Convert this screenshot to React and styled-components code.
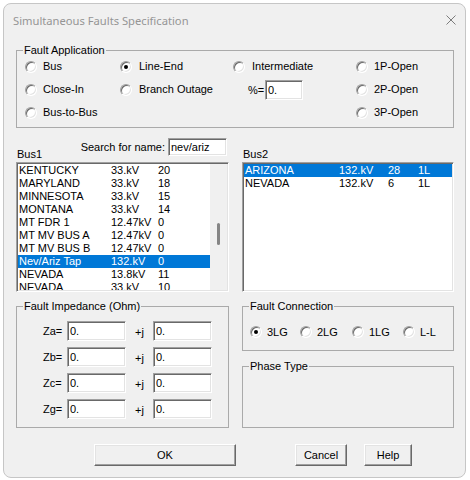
import React from 'react';
import styled, { createGlobalStyle } from 'styled-components';

const GlobalStyle = createGlobalStyle`
  html, body { margin: 0; padding: 0; background: #ffffff; }
  body {
    font-family: "Liberation Sans", Arial, sans-serif;
    font-size: 11px;
    color: #000;
  }
  *, *::before, *::after { box-sizing: border-box; }
`;

const Page = styled.div`
  padding: 3px;
`;

const Window = styled.div`
  width: 463px;
  height: 475px;
  border: 1px solid #c6c6c6;
  border-radius: 8px;
  background: #f0f0f0;
  display: flex;
  flex-direction: column;
  overflow: hidden;
`;

const TitleBar = styled.div`
  height: 32px;
  flex: none;
  display: flex;
  align-items: center;
  justify-content: space-between;
  padding: 0 9px 0 9px;
`;

const Title = styled.span`
  font-family: "Noto Sans", "Open Sans", sans-serif;
  font-size: 11.2px;
  color: #959595;
`;

const CloseButton = styled.span`
  display: flex;
  width: 10px;
  height: 10px;
`;

const Body = styled.div`
  padding: 0 11px 0 12px;
  display: flex;
  flex-direction: column;
`;

const GroupBox = styled.fieldset`
  margin: ${p => p.$mt || 0}px 0 0 0;
  padding: ${p => p.$pt || 0}px 0 ${p => p.$pb || 0}px 0;
  border: 1px solid #aaaaaa;
  min-width: 0;
  ${p => (p.$grow ? 'flex: 1;' : '')}
`;

const Legend = styled.legend`
  padding: 0 1px;
  margin-left: 6px;
  line-height: 13px;
  font-size: 11px;
  font-weight: normal;
`;

const AppGrid = styled.div`
  display: grid;
  grid-template-columns: 95px 113px 123px 1fr;
  grid-auto-rows: 23px;
  margin-top: -2px;
  padding-left: 8px;
`;

const RadioItem = styled.label`
  display: flex;
  align-items: center;
  gap: ${p => p.$gap || 6}px;
  white-space: nowrap;
  line-height: 13px;
`;

const RadioDot = styled.span`
  position: relative;
  flex: none;
  width: 12px;
  height: 12px;
  border-radius: 50%;
  background: #fff;
  border: 1px solid;
  border-color: #a0a0a0 #ffffff #ffffff #a0a0a0;
  box-shadow: inset 1px 1px 0 #696969, inset -1px -1px 0 #e3e3e3;
  &::after {
    content: '';
    display: ${p => (p.$checked ? 'block' : 'none')};
    position: absolute;
    left: 3px;
    top: 3px;
    width: 4px;
    height: 4px;
    border-radius: 50%;
    background: #000;
  }
`;

const Cell = styled.div`
  display: flex;
  align-items: center;
  padding-left: ${p => p.$pl || 0}px;
`;

const PercentLabel = styled.span`
  width: 17px;
  flex: none;
`;

const TextField = styled.input`
  width: ${p => p.$w}px;
  height: ${p => p.$h || 20}px;
  margin: 0;
  padding: 0 0 0 2px;
  border: 1px solid;
  border-color: #a0a0a0 #ffffff #ffffff #a0a0a0;
  box-shadow: inset 1px 1px 0 #696969, inset -1px -1px 0 #e3e3e3;
  background: #fff;
  font-family: "Liberation Sans", Arial, sans-serif;
  font-size: 11px;
  color: #000;
  outline: none;
  border-radius: 0;
`;

const TwoCols = styled.div`
  display: grid;
  grid-template-columns: 213px 212px;
  column-gap: 13px;
  margin-top: ${p => p.$mt}px;
`;

const Column = styled.div`
  display: flex;
  flex-direction: column;
`;

const ListHeader = styled.div`
  height: 24px;
  display: flex;
  justify-content: space-between;
  align-items: flex-start;
`;

const HeaderLabel = styled.span`
  align-self: flex-end;
  line-height: 13px;
  margin-bottom: 1px;
  padding-left: 1px;
`;

const Search = styled.div`
  display: flex;
  align-items: center;
  gap: 3px;
  margin-right: 2px;
  line-height: 13px;
`;

const ListBox = styled.div`
  height: 130px;
  background: #fff;
  border: 1px solid;
  border-color: #a0a0a0 #ffffff #ffffff #a0a0a0;
  box-shadow: inset 1px 1px 0 #696969, inset -1px -1px 0 #e3e3e3;
  padding: 1px;
  display: flex;
  overflow: hidden;
`;

const Items = styled.div`
  flex: 1;
  min-width: 0;
  overflow: hidden;
`;

const Row = styled.div`
  display: grid;
  grid-template-columns: ${p => p.$cols};
  height: 13px;
  line-height: 13px;
  padding-left: 1px;
  white-space: nowrap;
  background: ${p => (p.$sel ? '#0078d7' : 'transparent')};
  color: ${p => (p.$sel ? '#ffffff' : '#000000')};
`;

const ScrollBar = styled.div`
  width: 17px;
  flex: none;
  background: #f0f0f0;
  display: flex;
  justify-content: center;
  padding-top: 59px;
`;

const Thumb = styled.div`
  width: 3px;
  height: 22px;
  border-radius: 2px;
  background: #858585;
`;

const ImpGrid = styled.div`
  display: grid;
  grid-template-columns: 24px 59px 27px 59px;
  grid-auto-rows: 20px;
  row-gap: 6px;
  padding-left: 26px;
  align-items: center;
`;

const PlusJ = styled.span`
  padding-left: 9px;
  padding-top: 2px;
`;

const ConnRow = styled.div`
  display: grid;
  grid-template-columns: 50px 52px 51px auto;
  height: 18px;
  align-items: center;
  padding-left: 7px;
`;

const ButtonRow = styled.div`
  display: flex;
  margin-top: 16px;
  padding-left: 78px;
`;

const Button = styled.button`
  width: ${p => p.$w}px;
  height: 22px;
  margin: 0 0 0 ${p => p.$ml || 0}px;
  padding: 0;
  background: #f0f0f0;
  border: 1px solid;
  border-color: #ffffff #696969 #696969 #ffffff;
  box-shadow: inset -1px -1px 0 #a0a0a0, inset 1px 1px 0 #e3e3e3;
  font-family: "Liberation Sans", Arial, sans-serif;
  font-size: 11px;
  color: #000;
  border-radius: 0;
`;

function Radio({ label, checked, gap }) {
  return (
    <RadioItem $gap={gap}>
      <RadioDot $checked={checked} />
      <span>{label}</span>
    </RadioItem>
  );
}

const bus1 = [
  ['KENTUCKY', '33.kV', '20'],
  ['MARYLAND', '33.kV', '18'],
  ['MINNESOTA', '33.kV', '15'],
  ['MONTANA', '33.kV', '14'],
  ['MT FDR 1', '12.47kV', '0'],
  ['MT MV BUS A', '12.47kV', '0'],
  ['MT MV BUS B', '12.47kV', '0'],
  ['Nev/Ariz Tap', '132.kV', '0', true],
  ['NEVADA', '13.8kV', '11'],
  ['NEVADA', '33.kV', '10'],
];

const bus2 = [
  ['ARIZONA', '132.kV', '28', '1L', true],
  ['NEVADA', '132.kV', '6', '1L'],
];

const imp = ['Za=', 'Zb=', 'Zc=', 'Zg='];

export default function App() {
  return (
    <>
      <GlobalStyle />
      <Page>
        <Window>
          <TitleBar>
            <Title>Simultaneous Faults Specification</Title>
            <CloseButton>
              <svg width="10" height="10" viewBox="0 0 10 10">
                <path d="M0.5 0.5 L9.5 9.5 M9.5 0.5 L0.5 9.5" stroke="#7c7c7c" strokeWidth="1" fill="none" />
              </svg>
            </CloseButton>
          </TitleBar>
          <Body>
            <GroupBox $mt={8} $pb={3}>
              <Legend>Fault Application</Legend>
              <AppGrid>
                <Radio label="Bus" />
                <Radio label="Line-End" checked gap={7} />
                <Radio label="Intermediate" gap={7} />
                <Radio label="1P-Open" />
                <Radio label="Close-In" />
                <Radio label="Branch Outage" gap={7} />
                <Cell $pl={15}>
                  <PercentLabel>%=</PercentLabel>
                  <TextField $w={38} readOnly defaultValue="0." />
                </Cell>
                <Radio label="2P-Open" />
                <Radio label="Bus-to-Bus" />
                <div />
                <div />
                <Radio label="3P-Open" />
              </AppGrid>
            </GroupBox>

            <TwoCols $mt={10}>
              <Column>
                <ListHeader>
                  <HeaderLabel>Bus1</HeaderLabel>
                  <Search>
                    <span>Search for name:</span>
                    <TextField $w={59} $h={18} readOnly defaultValue="nev/ariz" />
                  </Search>
                </ListHeader>
                <ListBox>
                  <Items>
                    {bus1.map((r, i) => (
                      <Row key={i} $cols="92px 47px auto" $sel={r[3]}>
                        <span>{r[0]}</span>
                        <span>{r[1]}</span>
                        <span>{r[2]}</span>
                      </Row>
                    ))}
                  </Items>
                  <ScrollBar>
                    <Thumb />
                  </ScrollBar>
                </ListBox>
              </Column>
              <Column>
                <ListHeader>
                  <HeaderLabel>Bus2</HeaderLabel>
                </ListHeader>
                <ListBox>
                  <Items>
                    {bus2.map((r, i) => (
                      <Row key={i} $cols="94px 49px 30px auto" $sel={r[4]}>
                        <span>{r[0]}</span>
                        <span>{r[1]}</span>
                        <span>{r[2]}</span>
                        <span>{r[3]}</span>
                      </Row>
                    ))}
                  </Items>
                </ListBox>
              </Column>
            </TwoCols>

            <TwoCols $mt={8}>
              <GroupBox $pt={8} $pb={8}>
                <Legend>Fault Impedance (Ohm)</Legend>
                <ImpGrid>
                  {imp.map(l => (
                    <React.Fragment key={l}>
                      <span>{l}</span>
                      <TextField $w={59} readOnly defaultValue="0." />
                      <PlusJ>+j</PlusJ>
                      <TextField $w={59} readOnly defaultValue="0." />
                    </React.Fragment>
                  ))}
                </ImpGrid>
              </GroupBox>
              <Column>
                <GroupBox $pt={10} $pb={9}>
                  <Legend>Fault Connection</Legend>
                  <ConnRow>
                    <Radio label="3LG" checked gap={5} />
                    <Radio label="2LG" gap={5} />
                    <Radio label="1LG" gap={5} />
                    <Radio label="L-L" gap={5} />
                  </ConnRow>
                </GroupBox>
                <GroupBox $mt={9} $grow>
                  <Legend>Phase Type</Legend>
                </GroupBox>
              </Column>
            </TwoCols>

            <ButtonRow>
              <Button $w={142}>OK</Button>
              <Button $w={52} $ml={59}>Cancel</Button>
              <Button $w={48} $ml={17}>Help</Button>
            </ButtonRow>
          </Body>
        </Window>
      </Page>
    </>
  );
}
